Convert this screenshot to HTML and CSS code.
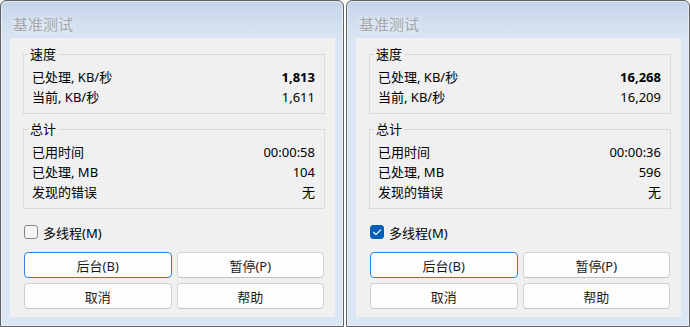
FILE: index.html
```html
<!DOCTYPE html>
<html lang="zh-CN">
<head>
    <meta charset="UTF-8">
    <title>基准测试</title>
    <link rel="stylesheet" href="styles.css">
</head>
<body>
    <div class="screen">
        <div class="dialog">
            <div class="title">基准测试</div>
            <div class="client">
                <fieldset class="group">
                    <legend>速度</legend>
                    <div class="row"><span>已处理, KB/秒</span><span class="strong">1,813</span></div>
                    <div class="row"><span>当前, KB/秒</span><span>1,611</span></div>
                </fieldset>
                <fieldset class="group second">
                    <legend>总计</legend>
                    <div class="row"><span>已用时间</span><span>00:00:58</span></div>
                    <div class="row"><span>已处理, MB</span><span>104</span></div>
                    <div class="row"><span>发现的错误</span><span>无</span></div>
                </fieldset>
                <label class="check"><span class="box"></span>多线程(M)</label>
                <div class="buttons">
                    <button class="btn default">后台(B)</button>
                    <button class="btn">暂停(P)</button>
                    <button class="btn">取消</button>
                    <button class="btn">帮助</button>
                </div>
            </div>
        </div>

        <div class="dialog">
            <div class="title">基准测试</div>
            <div class="client">
                <fieldset class="group">
                    <legend>速度</legend>
                    <div class="row"><span>已处理, KB/秒</span><span class="strong">16,268</span></div>
                    <div class="row"><span>当前, KB/秒</span><span>16,209</span></div>
                </fieldset>
                <fieldset class="group second">
                    <legend>总计</legend>
                    <div class="row"><span>已用时间</span><span>00:00:36</span></div>
                    <div class="row"><span>已处理, MB</span><span>596</span></div>
                    <div class="row"><span>发现的错误</span><span>无</span></div>
                </fieldset>
                <label class="check">
                    <span class="box checked">
                        <svg width="14" height="14" viewBox="0 0 14 14"><polyline points="3.6,7.3 6,9.6 10.6,4.9" fill="none" stroke="#fff" stroke-width="1.2" stroke-linecap="round" stroke-linejoin="round"/></svg>
                    </span>多线程(M)
                </label>
                <div class="buttons">
                    <button class="btn default">后台(B)</button>
                    <button class="btn">暂停(P)</button>
                    <button class="btn">取消</button>
                    <button class="btn">帮助</button>
                </div>
            </div>
        </div>
    </div>
</body>
</html>
```

FILE: styles.css
```css
body {
    margin: 0;
    background: #ffffff;
    font-family: "Noto Sans", "Noto Sans CJK SC", sans-serif;
    font-size: 13px;
    color: #000;
}

.screen {
    display: flex;
    gap: 2px;
    width: 690px;
    height: 327px;
}

.dialog {
    box-sizing: border-box;
    width: 344px;
    height: 327px;
    border: 1px solid #5f6266;
    border-radius: 6px 6px 0 0;
    background: linear-gradient(#c5d5e9, #d5e2f1 30px, #dbe6f4 40px, #dbe6f4);
    box-shadow: inset 0 0 0 1px rgba(255, 255, 255, 0.45);
}

.title {
    height: 37px;
    box-sizing: border-box;
    padding: 13px 0 0 12px;
    font-size: 15px;
    line-height: 20px;
    color: #a4a6a9;
    text-shadow: 0 0 6px rgba(255, 255, 255, 0.9);
}

.client {
    height: 279px;
    margin: 0 8px 0 9px;
    background: #f0f0f0;
    overflow: hidden;
}

.group {
    margin: 8px 10px 0 13px;
    padding: 5px 9px 6px 8px;
    border: 1px solid #dadada;
    min-width: 0;
}

.group.second {
    margin-top: 7px;
}

legend {
    margin-left: -4px;
    padding: 0 2px;
    line-height: 16px;
}

.row {
    display: flex;
    justify-content: space-between;
    height: 20px;
    line-height: 20px;
}

.strong {
    font-weight: bold;
}

.check {
    display: flex;
    align-items: center;
    gap: 5px;
    height: 20px;
    margin: 13px 0 0 14px;
}

.box {
    box-sizing: border-box;
    width: 14px;
    height: 14px;
    border: 1px solid #8a8a8a;
    border-radius: 3px;
    background: #f6f6f6;
}

.box.checked {
    border-color: #005fb8;
    background: #005fb8;
}

.box svg {
    display: block;
    margin: -1px;
}

.buttons {
    display: grid;
    grid-template-columns: 1fr 1fr;
    grid-auto-rows: 26px;
    column-gap: 5px;
    row-gap: 5px;
    width: 300px;
    margin: 10px 0 0 14px;
}

.btn {
    font-family: inherit;
    font-size: 13px;
    color: #1b1b1b;
    background: #fdfdfd;
    border: 1px solid #d2d2d2;
    border-bottom-color: #c2c2c2;
    border-radius: 4px;
    padding: 0;
}

.btn.default {
    border-color: #2f83d8;
}
```
